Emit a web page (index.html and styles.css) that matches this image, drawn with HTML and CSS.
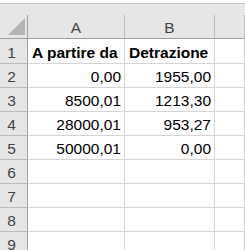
FILE: index.html
```html
<!DOCTYPE html>
<html lang="it">

<head>
    <meta charset="UTF-8">
    <meta name="viewport" content="width=device-width, initial-scale=1.0">
    <title>Detrazioni</title>
    <link rel="stylesheet" href="styles.css">
</head>

<body>
    <div class="sheet">
        <div class="topbar"></div>
        <div class="grid">
            <!-- intestazioni di colonna -->
            <div class="corner">
                <svg viewBox="0 0 18 18" class="cornerMark">
                    <polygon points="18,0 18,18 0,18" />
                </svg>
            </div>
            <div class="colHead">A</div>
            <div class="colHead">B</div>
            <div class="colHead"></div>

            <div class="rowHead">1</div>
            <div class="cell bold">A partire da</div>
            <div class="cell bold">Detrazione</div>
            <div class="cell"></div>

            <div class="rowHead">2</div>
            <div class="cell num">0,00</div>
            <div class="cell num">1955,00</div>
            <div class="cell"></div>

            <div class="rowHead">3</div>
            <div class="cell num">8500,01</div>
            <div class="cell num">1213,30</div>
            <div class="cell"></div>

            <div class="rowHead">4</div>
            <div class="cell num">28000,01</div>
            <div class="cell num">953,27</div>
            <div class="cell"></div>

            <div class="rowHead">5</div>
            <div class="cell num">50000,01</div>
            <div class="cell num">0,00</div>
            <div class="cell"></div>

            <div class="rowHead">6</div>
            <div class="cell"></div>
            <div class="cell"></div>
            <div class="cell"></div>

            <div class="rowHead">7</div>
            <div class="cell"></div>
            <div class="cell"></div>
            <div class="cell"></div>

            <div class="rowHead">8</div>
            <div class="cell"></div>
            <div class="cell"></div>
            <div class="cell"></div>

            <div class="rowHead">9</div>
            <div class="cell"></div>
            <div class="cell"></div>
            <div class="cell"></div>
        </div>
    </div>
</body>

</html>
```

FILE: styles.css
```css
* {
    box-sizing: border-box;
}

body {
    margin: 0;
    background: white;
    font-family: "Liberation Sans", Arial, sans-serif;
    font-size: 15.5px;
    overflow: hidden;
}

.sheet {
    width: 245px;
    height: 250px;
    padding-top: 3px;
}

.topbar {
    height: 12px;
    background: #e6e6e6;
    border-top: 1px solid #c6c6c6;
}

.grid {
    display: grid;
    grid-template-columns: 28px 97px 90px 1fr;
    grid-template-rows: 24px 25px repeat(8, 24px);
}

.corner,
.colHead,
.rowHead,
.cell {
    display: flex;
    align-items: flex-end;
    padding-bottom: 1px;
    border-right: 1px solid #d4d4d4;
    border-bottom: 1px solid #d4d4d4;
    white-space: nowrap;
}

.corner {
    background: #e6e6e6;
    justify-content: flex-end;
    padding: 0 2px 3px 0;
    border-right-color: #9f9f9f;
    border-bottom-color: #9f9f9f;
}

.cornerMark {
    width: 17px;
    height: 17px;
}

.cornerMark polygon {
    fill: #b4b4b4;
}

.colHead {
    background: #e6e6e6;
    justify-content: center;
    color: #444;
    border-right-color: #bcbcbc;
    border-bottom-color: #9f9f9f;
}

.rowHead {
    background: #e6e6e6;
    justify-content: center;
    color: #444;
    padding-right: 4px;
    border-right-color: #9f9f9f;
    border-bottom-color: #bcbcbc;
}

.cell {
    color: black;
    padding-left: 4px;
    padding-right: 3px;
}

.bold {
    font-weight: bold;
}

.num {
    justify-content: flex-end;
}
```
